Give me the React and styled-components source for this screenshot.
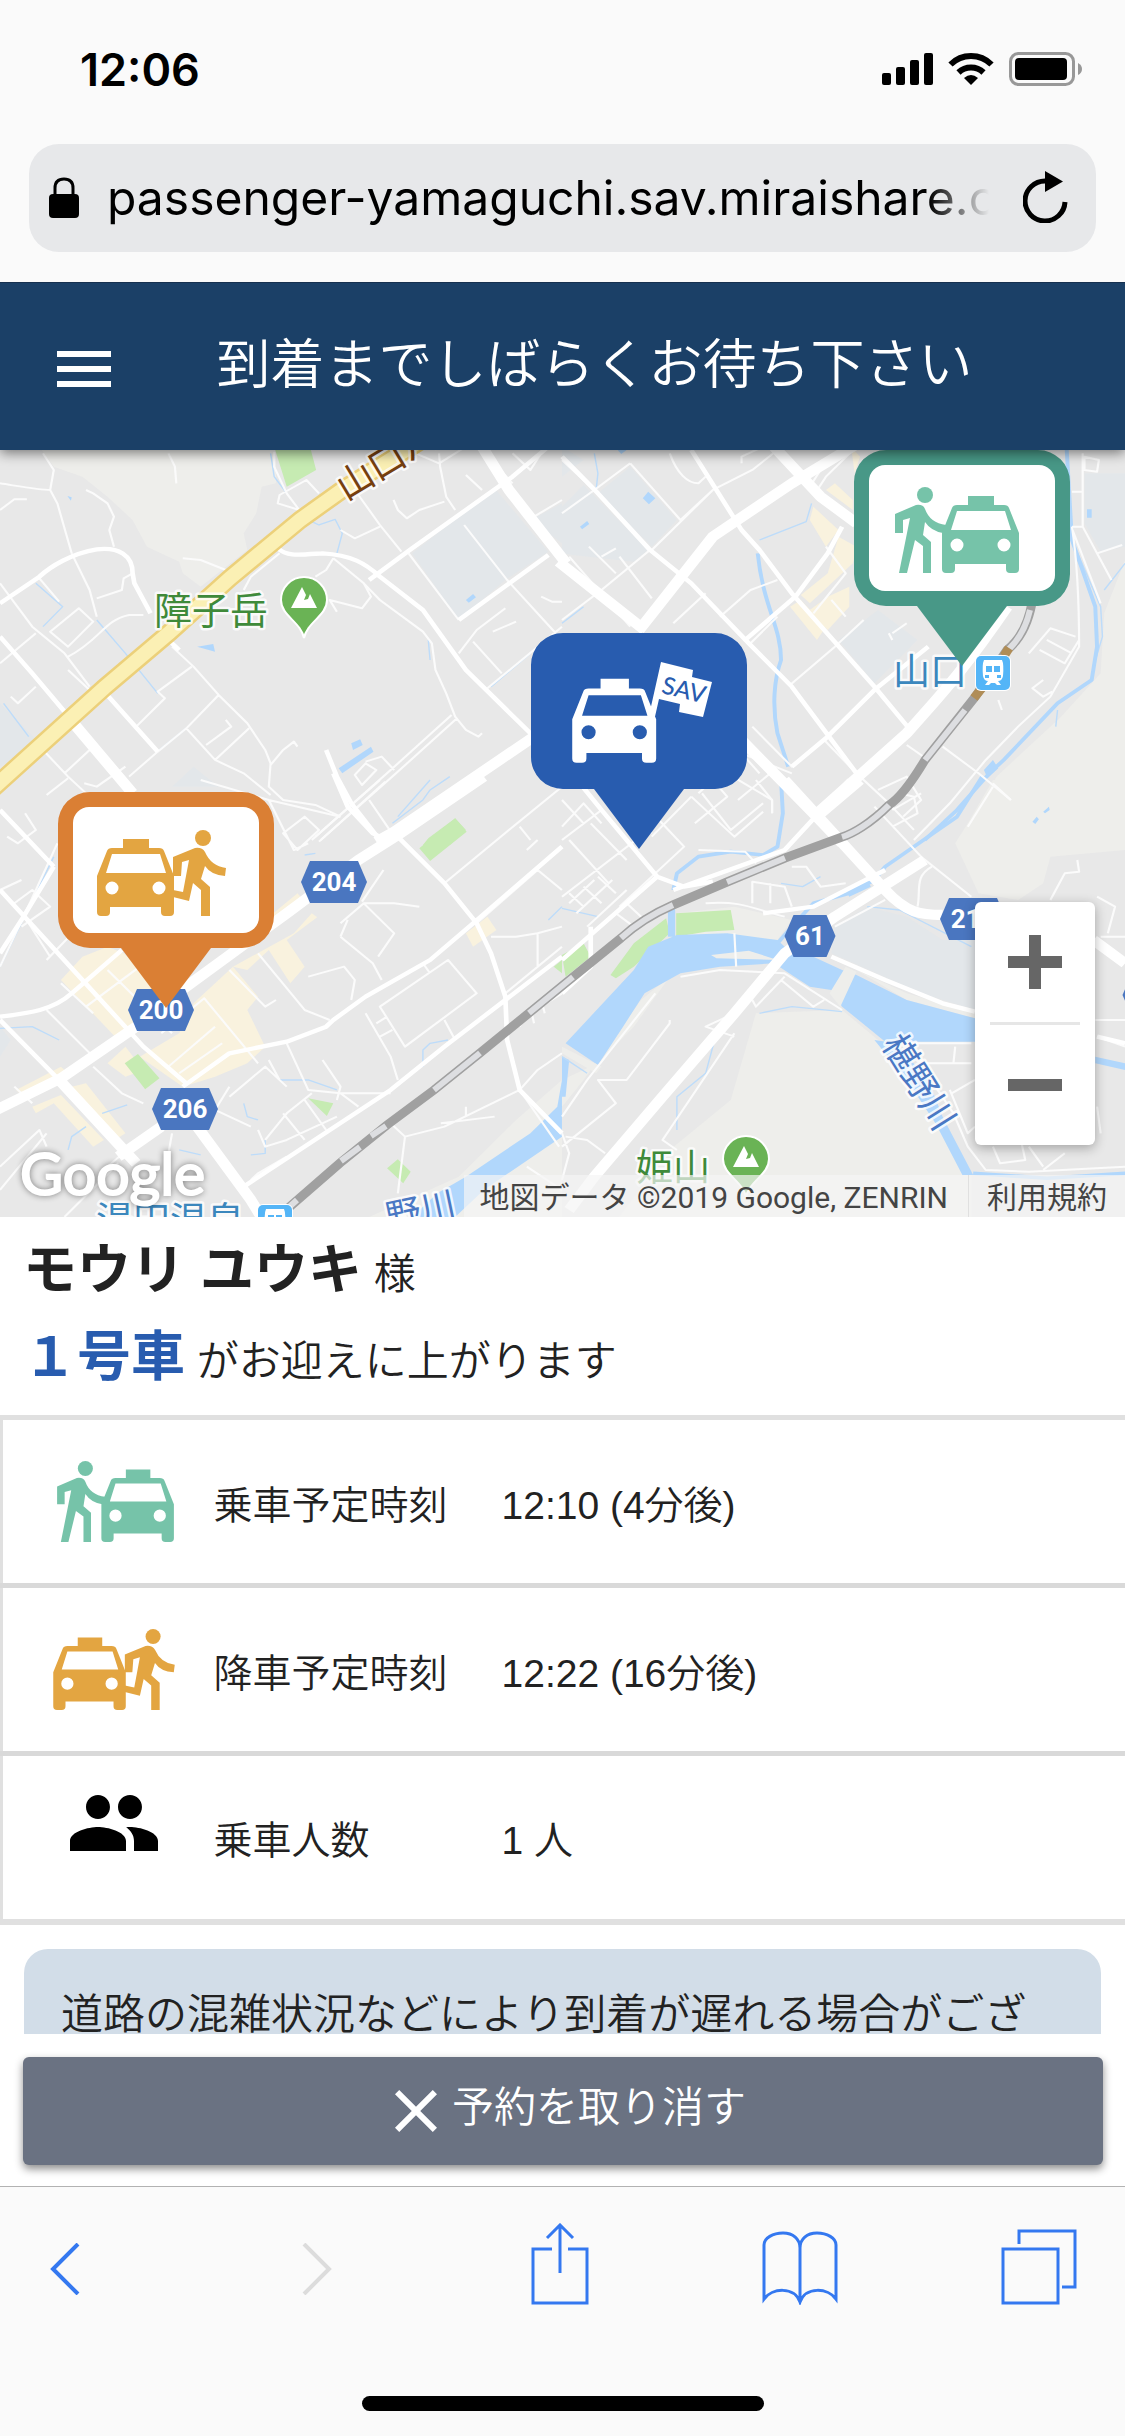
import { styled, createGlobalStyle } from "styled-components";
import { MdClose, MdMenu, MdPeople } from "react-icons/md";

const GlobalStyle = createGlobalStyle`
  * {
    box-sizing: border-box;
  }
  body {
    margin: 0;
    background-color: #fff;
    color: #222;
    font-family: "Liberation Sans", "Noto Sans CJK JP", sans-serif;
  }
  button {
    border: none;
    padding: 0;
    background: none;
    font-family: inherit;
    cursor: pointer;
  }
`;

const Page = styled.div`
  display: flex;
  flex-direction: column;
  min-height: 100vh;
`;

/* ---------- browser bars ---------- */
const TopBar = styled.div`
  background-color: #fafafa;
  padding: 40px 29px 30px;
`;
const StatusBar = styled.div`
  display: flex;
  justify-content: space-between;
  align-items: center;
  height: 58px;
  padding: 0 14px 0 51px;
  margin-bottom: 46px;
`;
const Clock = styled.div`
  font-family: Inter, sans-serif;
  font-size: 45px;
  font-weight: 600;
  color: #000;
`;
const AddressBar = styled.div`
  display: flex;
  align-items: center;
  height: 108px;
  padding: 0 28px 0 20px;
  border-radius: 30px;
  background-color: #e7e8ea;
`;
const Address = styled.input`
  flex: 1;
  min-width: 0;
  margin: 0 34px 0 28px;
  padding: 0;
  border: none;
  outline: none;
  background: none;
  color: #000;
  font-family: Inter, sans-serif;
  font-size: 48px;
  line-height: 64px;
  mask-image: linear-gradient(to left, transparent, #000 60px);
`;
const ToolBar = styled.nav`
  display: grid;
  grid-template-columns: 252fr 230fr 231fr 239fr 75fr;
  align-items: end;
  justify-items: start;
  padding: 36px 48px 0 50px;
`;
const ToolButton = styled.button`
  display: flex;
  padding-bottom: ${(props) => props.$bottom || 0}px;
`;
const BottomBar = styled.footer`
  flex: 1;
  border-top: 1px solid #b2b2b2;
  background-color: #fafafa;
  padding-bottom: 24px;
`;
const HomeBar = styled.div`
  width: 402px;
  height: 15px;
  margin: 91px auto 0;
  border-radius: 8px;
  background-color: #000;
`;

/* ---------- app header ---------- */
const Header = styled.header`
  position: relative;
  z-index: 1;
  display: flex;
  align-items: center;
  height: 168px;
  padding: 4px 48px 0;
  border-top: 1px solid #16304f;
  background-color: #1b4067;
  color: #fff;
  box-shadow: 0 3px 12px rgba(0, 0, 0, 0.5);
  clip-path: inset(0 0 -20px);
`;
const MenuButton = styled.button`
  display: flex;
  color: #fff;
  font-size: 72px;
`;
const Title = styled.h1`
  flex: 1;
  margin: 0 8px 8px 0;
  text-align: center;
  font-size: 54px;
  font-weight: 350;
  line-height: 72px;
`;

/* ---------- map ---------- */
const MapArea = styled.section`
  position: relative;
  height: 767px;
  overflow: hidden;
  background-color: #e8e8e8;
`;
const MapSvg = styled.svg`
  display: block;
  width: 100%;
  height: 100%;
`;
const ZoomBox = styled.div`
  position: absolute;
  right: 30px;
  bottom: 72px;
  width: 120px;
  padding: 0 15px;
  border-radius: 6px;
  background-color: #fff;
  box-shadow: 0 3px 12px rgba(0, 0, 0, 0.3);
`;
const ZoomButton = styled.button`
  display: flex;
  align-items: center;
  justify-content: center;
  width: 100%;
  height: 120px;
  & + & {
    border-top: 3px solid #e6e6e6;
    height: 123px;
  }
`;
const Attribution = styled.div`
  position: absolute;
  right: 0;
  bottom: 0;
  display: flex;
  height: 42px;
  background-color: rgba(245, 245, 245, 0.7);
  color: #444;
  font-family: Roboto, "Noto Sans CJK JP", sans-serif;
  font-size: 30px;
  line-height: 46px;
  white-space: nowrap;
`;
const Copyright = styled.span`
  padding: 0 20px 0 16px;
  border-right: 1px solid #e0e0e0;
`;
const TermsLink = styled.a`
  padding: 0 18px;
  color: #444;
  text-decoration: none;
`;

/* ---------- reservation ---------- */
const Info = styled.section`
  padding: 12px 23px 12px;
`;
const InfoLine = styled.p`
  margin: 0;
  font-size: 42px;
  font-weight: 350;
  line-height: 82px;
`;
const Name = styled.strong`
  font-size: 54px;
  font-weight: 700;
`;
const CarNo = styled(Name)`
  color: #285caf;
`;
const Table = styled.table`
  width: 100%;
  border-collapse: collapse;
  border-top: 5px solid #e0e0e0;
  border-bottom: 6px solid #e0e0e0;
`;
const Row = styled.tr`
  height: 168px;
  border-left: 3px solid #e0e0e0;
  & + & {
    border-top: 5px solid #d9d9d9;
  }
`;
const IconCell = styled.td`
  width: 212px;
  padding: 0 0 ${(props) => props.$lift || 0}px ${(props) => props.$left}px;
  & svg {
    display: block;
  }
`;
const Label = styled.th`
  width: 288px;
  padding: 0;
  text-align: left;
  font-size: 39px;
  font-weight: 350;
`;
const Value = styled.td`
  padding: 0;
  font-size: 39px;
  font-weight: 350;
`;
const NoticeWrap = styled.div`
  height: 109px;
  padding: 24px 24px 0;
  overflow: hidden;
`;
const Notice = styled.p`
  margin: 0;
  padding: 34px 37px;
  border-radius: 24px;
  background-color: #d2dde8;
  font-size: 42px;
  font-weight: 350;
  line-height: 63px;
`;
const Actions = styled.div`
  padding: 23px 22px 21px 23px;
`;
const CancelButton = styled.button`
  display: flex;
  align-items: center;
  justify-content: center;
  width: 100%;
  height: 108px;
  border-radius: 6px;
  background-color: #6a7282;
  color: #fff;
  font-size: 42px;
  font-weight: 350;
  line-height: 60px;
  box-shadow: 0 4px 9px rgba(0, 0, 0, 0.45);
  & svg {
    font-size: 72px;
  }
  & span {
    padding-bottom: 6px;
  }
`;

/* ---------- taxi icons ---------- */
const TAXI =
  "M47 46L57 21Q58 18 62 18H73V9H99V18H109Q113 18 114 21L124 46V82Q124 86 120 86H115Q111 86 111 82V77H60V82Q60 86 56 86H51Q47 86 47 82ZM62 24L56 43H116L110 24ZM68.500 58a6.500 6.500 0 1 0-13 0a6.500 6.500 0 1 0 13 0ZM115.500 58a6.500 6.500 0 1 0-13 0a6.500 6.500 0 1 0 13 0Z";

const BoardShape = () => (
  <g fill="#76c3a9" fillRule="evenodd">
    <circle cx="30" cy="8" r="8" />
    <path d="M0 27L21 18Q28 17 30 22Q35 36 51 38L48 46Q36 44 30 35L28 48L36 55V86H28V59L20 53L12 86H4L15 31L8 33V46H0Z" />
    <path d={TAXI} />
  </g>
);

const AlightShape = () => (
  <g fill="#e3a541" fillRule="evenodd">
    <circle cx="106" cy="8" r="8" />
    <path d="M76 27L98 18Q105 17 108 22Q114 36 129 38L128 46Q114 45 108 36L104 49L113 57V86H104V60L96 53L92 71L76 67V60L86 62L92 30L85 32L84 46H76Z" />
    <path d={TAXI} transform="translate(-47 0)" />
  </g>
);

const BoardIcon = () => (
  <svg width="117" height="81" viewBox="0 0 124 86">
    <BoardShape />
  </svg>
);
const AlightIcon = () => (
  <svg width="122" height="81" viewBox="0 0 129 86">
    <AlightShape />
  </svg>
);

/* ---------- map data ---------- */
const tiles = [
  {
    at: "translate(0 -10) scale(.3584 .3333)",
    hill: "M110 20H770V130L730 140L715 220L680 280L690 330L560 440L510 400L500 365L410 320L370 240L300 170L230 110L150 80Z",
    block:
      "M1380 145L1530 335L1410 420L1280 540L1150 340ZM1480 240L1568 190V310ZM0 790L110 910L0 980ZM540 980L610 1040H480Z",
    park: "M765 20H865L882 90L800 140ZM1180 1215L1195 1195L1270 1135L1300 1170L1255 1215Z",
    lake: "M945 985L1035 920L1042 935L955 1000ZM550 620L595 612L600 635ZM1300 480L1320 462L1328 472L1308 488ZM980 910L1005 898L1012 915L985 930ZM188 168L200 172L198 182Z",
    stream:
      "M870 245L890 255L935 238L955 280L940 340M10 790L80 890M100 430L175 500L120 560M270 540L350 640L440 760M445 930L520 865M1370 740L1480 640M1095 1150L1180 1080L1200 1050L1255 1010M755 40L765 110L800 160M1195 600L1200 660",
    minor:
      "M0 130C60 140 110 150 140 150L160 190L200 340M120 40L150 90L140 150M0 210L40 178H75M240 150L260 160L300 190L318 230L305 270L318 320M470 40L488 80L492 130M765 35V80L800 160L835 210L775 190L780 165L855 120L890 160M510 355L560 360L630 390M200 340L250 450L270 530M0 430L90 560L180 640L250 740M110 415L165 485M140 575L220 505L260 545L190 620ZM190 650C280 600 290 540 360 525H400M270 475L340 450L345 415L370 400M30 770L50 790L100 740M0 670L100 580M190 690L250 750M380 860L460 775L440 755L535 680M480 620L540 680L610 765L690 850L740 930L755 970L750 1040L790 1080L880 1095L950 1130M520 865L610 765M520 865L600 960L680 1000L755 1065M600 960L695 865M575 915L645 860L630 840M755 975L790 930L820 905L830 920M440 935L520 865M360 1010L440 935M950 270L990 295L1060 260M1000 165L1060 255L1120 335M1140 340L1280 540M1295 255L1415 420L1568 600M1225 40L1228 80L1245 170L1270 210M1160 40L1225 70L1300 20M1098 180L1110 210L1135 235L1170 210L1240 185M1300 105L1345 150M1490 230L1568 180M1510 470L1540 485H1568M1280 640L1330 570L1410 505M1375 575L1440 545M1320 605L1400 700M930 355L1015 430L1060 480L1180 575L1205 610L1215 690L1245 760L1270 830L1300 870L1335 890L1345 880M1015 430L1035 470L1010 505L920 480L940 515M880 410L910 390L930 355M1260 825L1090 990L870 1200M1275 835L1105 1000L890 1205M990 1005L1020 970L1050 990L1010 1035ZM1020 965L1065 950L1100 990M120 930L190 1010L250 1070M180 1000L250 930M130 1065L190 1015M235 1030L270 1040L350 980M1100 1190L1030 1080M1360 745L1568 560M1370 60L1430 130M1430 40L1480 90L1510 40M680 450L700 410L780 340",
    road: "M0 490L110 410C140 380 200 340 270 328C330 320 370 345 370 400L375 430L420 520M775 325C800 350 830 345 900 340C980 345 1020 370 1060 410L1180 510L1300 690L1480 880M1030 420L1150 325L1430 110L1530 20M295 760L440 935M0 590L90 700L180 815M910 930L940 1010L980 1090L1060 1200M1280 540L1530 345M470 600L500 630",
    major: "M1345 20L1420 150L1580 370M1050 1205L1100 1175L1490 890M205 850L370 1060",
  },
  {
    at: "translate(562 -10) scale(.3591 .3333)",
    hill: "M1568 360L1510 520L1500 700L1390 830L1210 1010L1110 1200H1568Z",
    block:
      "M0 200L60 135L240 330L200 365L30 345L0 340ZM100 160L190 80L320 240L250 320ZM1455 100H1568V320L1500 335L1455 250ZM770 600L880 510L990 600L870 730ZM0 20L60 60L0 110Z",
    shop: "M735 150L760 130L810 180V210ZM690 240L700 200L770 270L735 320ZM770 290L820 320L810 370L740 440L690 490L665 465L740 400ZM635 500L665 480L735 560L710 600ZM740 470L800 440V500L740 570L690 510ZM805 20L830 50L815 100Z",
    lake: "M225 175L240 155L260 175L242 193ZM50 260L70 243L76 252L56 268ZM1462 208H1475V233H1462ZM1310 1145L1322 1130L1328 1138L1318 1152ZM1340 1115L1356 1100L1358 1110L1345 1120ZM1175 990L1200 960L1215 985L1185 1015ZM155 30H180L165 42Z",
    stream:
      "M695 190L680 245L550 300M90 40L100 100L95 150M1420 300L1500 500L1505 590L1480 680M1568 370L1510 450M1380 810L1375 860M0 550L60 500",
    river:
      "M545 340C560 500 610 560 610 660C590 720 585 800 600 880L630 980M1405 20L1420 300L1485 500L1490 620L1475 720L1380 790L1230 960L1190 1000L1100 1110L1010 1200",
    minor:
      "M0 60L90 150M190 70L90 150L0 220M190 70L330 240L420 150L530 90L600 30M250 330L420 150M20 350L190 560M0 540L110 450L245 330M160 350L250 475M75 320L150 400M110 350L150 325M400 460L310 550M440 530L525 450L600 420M520 615L600 530M635 735L760 620L840 540M735 320L790 400L700 520M750 480L790 530M730 900L820 1000L910 1090L980 1170M960 915L1020 960M1060 920L1160 1000L1250 1080M1300 640L1360 565L1430 590M1330 630L1400 670L1440 600M1350 600L1420 640M1340 720L1310 745L1340 770L1365 755M1215 780L1225 810M910 580L920 600M920 580L960 550M1420 260C1440 400 1440 600 1440 620L1360 770L1270 860L1180 960L1080 1090L980 1200M1420 265L1500 490M1450 260L1530 420M1490 340L1560 315M1455 50L1495 60L1490 95L1455 90ZM1450 40V260H1420M1420 155H1450M380 1060L500 940L550 1000M500 940L640 1000M460 1000L585 1080V1120M390 1060L470 1170L560 1090M250 1190L360 1070M0 1160L60 1090L110 1150M880 1050L960 1010L1000 1080L950 1130M530 860L640 980L730 900M300 40C320 100 350 130 380 130L400 110M500 70V50L560 20M690 140L720 90L800 20M705 160L735 110L820 20",
    road: "M0 50L100 160L245 330L360 430L520 610L640 740L820 1000M360 30L500 270L550 330L640 460L870 740L970 870M510 600L650 470L740 340L780 260M730 900L870 750L1020 620M640 980L740 890",
    major:
      "M-10 365L230 570M215 570L420 290L640 130L840 0M590 20L720 170L820 250M500 900L700 1120L780 1210M700 1130L960 880C1040 780 1100 720 1240 500",
  },
  {
    at: "translate(0 330) scale(.3584 .3333)",
    hill: "M1030 1311L1280 1190L1440 1020L1568 900V1311Z",
    block: "M0 740L30 780L0 830Z",
    shop: "M170 600L230 530L300 500L345 520L470 640L430 700L330 780ZM540 670L610 600L650 560L720 650L690 690L740 800L690 850L600 890L510 920L390 830L500 760ZM650 560L820 460L870 400L885 412L800 480L850 560L810 610L750 510L690 570ZM740 420L830 340L842 355L760 440ZM200 920L240 910L350 1060L320 1080ZM90 980L170 945L290 1080L260 1100L150 970L100 1000ZM45 930L170 860L185 875L60 945ZM300 850L350 800L400 870L350 890ZM1300 460L1360 410L1385 450L1320 500Z",
    park: "M348 850L385 822L445 895L405 928ZM1170 205L1270 115L1302 155L1200 243ZM860 955L930 970L912 1008ZM1080 1165L1110 1138L1146 1175L1125 1210ZM1545 560L1568 540V580Z",
    lake: "M1568 900L1555 980L1480 1060L1300 1190L1220 1240L1150 1311H1270L1350 1230L1568 1070Z",
    stream:
      "M0 745L90 740L165 780M780 900H860L940 930M1180 860V810L1200 790L1250 780M285 1000L355 975M680 970L690 1010L720 1020M1110 110L1200 0M190 1110L200 1070L240 1040M500 1110L560 1125M740 1080V1120L700 1125M850 225L880 220M1530 420L1568 380M0 560L150 230",
    minor:
      "M0 560L70 400L160 190M300 570L480 760M240 680L390 560M170 610L260 700M130 690L260 830L330 770M450 760L570 655L720 850M640 570L740 680L770 660M720 520L850 690L920 720M470 860L600 740M500 880L620 790M950 470L1040 550L1065 600M970 420L950 470M1015 370L1100 460L1055 530M1170 380L1100 370L1015 370L950 430M1010 365L1070 270M1060 680L1250 540L1330 640L1130 800ZM1020 700L1090 830L1110 900M1050 730L1080 710M1060 770L1095 750M1180 550L1200 580M1240 720L1270 780M1240 310L1420 150L1568 20M1330 430L1500 270L1568 330M800 790L860 930L950 940H1090M740 1080L800 1000L870 940M720 1050L740 1100L800 1080L940 1010M790 1000L850 1080M850 960L910 1050M900 840L950 920L940 960M1080 1020L1130 1070L1110 1240M1130 1070L1240 1040L1450 930M1230 1030L1380 1010M1300 980V1010M950 940L1000 980M0 1230L130 1060M0 1160L110 1050L130 1100M180 1311L330 1150M700 1200L720 1180L800 1130M480 1060L460 1180M860 590L960 560L990 600L980 660M640 920L600 990L700 1040M750 840L780 900M640 950L740 860L800 920M790 160L850 110L890 150L830 210ZM750 60L820 210L860 190M560 0L750 60L950 110M880 170L1060 0M895 180L1075 5M1370 470H1440L1500 460L1568 440M1500 460V560M1410 640L1568 500M1450 720L1568 640M1450 740L1470 700M1490 730L1480 680M1520 700L1510 660M1450 930L1500 870L1568 820M1450 140L1480 180M1470 210L1500 180M70 100L100 150L50 190L20 170M40 370L90 330L140 380L60 440M130 540L220 440M80 430L140 530M260 860L340 940L400 970M90 970L40 920M0 330L60 300M300 1160L420 1050M1450 930L1560 1100M1470 1160L1568 1230",
    road: "M0 90L150 260M0 330L230 600L400 800L520 910M0 710C80 700 150 690 200 640L340 510M0 720L165 900M150 260L60 420L0 520M510 920L640 820L800 785L910 740L930 720L1020 650L1200 540L1320 430L1568 200M1110 170L1240 310L1330 430L1370 520L1410 650L1415 780L1450 930L1568 1060M680 1220L1090 930L1240 800L1410 660L1568 530M930 -20L970 80L1040 160L1080 180",
    major:
      "M-10 990L170 895L380 740L520 620L800 400L1000 240L1110 165L1350 -10M165 900L380 1150M330 1130L450 1040M550 1040L700 1260L740 1330",
  },
  {
    at: "translate(562 330) scale(.3591 .3333)",
    hill: "M540 700L780 690L880 780L900 800L1000 930L1140 1180V1311H160L300 1110L470 960ZM1095 190L1130 130L1200 0H1568V210L1360 230L1340 310L1270 360L1160 340ZM320 400L480 380L640 420L600 480H320ZM0 900L100 850L200 740L300 590L220 660L60 900L0 980ZM820 570L960 640L1150 700V715L960 660Z",
    block: "M760 440L850 380L960 410L1060 480H1150V690L1000 640L750 520Z",
    park: "M135 585L200 490L290 415L300 460L200 560L150 595ZM318 400L470 390L480 450L400 455L318 470ZM0 525L60 490L80 530L10 590Z",
    lake: "M10 790L200 570L240 500L320 465L460 460L600 480L640 520L700 530L780 570L820 585L960 660L1150 715V785H900L780 680L750 630L690 620L590 550L440 560L330 580L230 640L170 740L100 855ZM870 780L930 790L1020 900L1060 1010L1145 1185H1115L1040 1030L960 900ZM295 370H315V470H295ZM790 330L850 300L860 320L800 350ZM1485 830L1568 850V870L1485 850ZM0 830L20 840L10 950H0Z",
    bank: "M415 525L520 512L600 540L430 535ZM745 640L790 560L820 575L775 680ZM0 800L110 860L95 880L0 820Z",
    stream:
      "M550 700L640 680L780 695M320 1050V950L400 880L425 780M0 385L100 410M610 310L670 320L720 290M850 380L940 390L1140 500M0 830L70 880",
    river:
      "M310 330L320 280L380 230L470 215L560 225L600 200L615 100L610 0M1170 -10L1100 110L900 260L870 300L800 340L700 370L640 440L600 490M1145 1180L1350 1195L1568 1180",
    minor:
      "M0 180L110 90M0 350L230 160L340 20M20 180L130 310M80 130L180 240M160 60L250 160M0 60L60 130M270 120L340 200L160 380M420 0L460 50L370 130M360 50L480 170L560 95M540 0L585 60V100M490 60L580 -20M870 80L1000 230L1140 350M920 90L1000 40M920 140L990 100L980 50L940 40M1200 10L1250 60M990 380C1000 330 980 290 1030 260M640 260H680L720 320L790 310M530 370V305L620 320L640 380M580 310V370M380 210L510 215L540 250M400 370C500 360 540 390 620 410M330 590L440 570L620 580L780 690M610 600L700 680L730 660M620 590L540 680L530 660M300 720V730L180 900H100L150 970L0 1100M260 640L70 900L0 1010M480 760L280 1080L320 1110M480 770L400 740L480 700M10 1070L70 1080L120 1120M1360 360L1400 280L1440 275L1435 240M1500 470H1568M1490 350L1540 380L1520 460M1485 720H1568M1490 770L1568 800M960 790H1140M1010 850H1140M1095 800L1090 850M1040 920L1090 1000L1130 1100L1180 1170L1300 1175L1568 1160M1085 940L1150 900M1080 930L1130 1060L1150 1040M1200 1100L1220 1150L1290 1140L1280 1090M1340 1170L1400 1120M1300 1100L1340 1160M1490 980L1500 1060M20 340L60 380M60 320L110 370M100 290L150 340M40 400L140 300M70 440L180 330M20 370L90 300M150 400L200 440M180 370L230 420M480 460L485 560M0 1060L20 1120L0 1200M1130 140L1200 20M760 440L900 360",
    road: "M50 10L110 90L265 290L340 320L420 305M750 530L900 600L1060 670L1150 695M0 540L265 290M310 330L620 210L800 0M80 440L80 560L0 640M560 400L700 380L900 270M1490 770L1568 790",
    major:
      "M620 0L900 330C960 400 1000 405 1060 405M1010 240L760 410L620 520L480 700L280 950L90 1190L20 1290M830 0L720 100M1480 480L1568 550",
  },
];

const layers = [
  { key: "hill", fill: "#eeeeeb" },
  { key: "block", fill: "#e3e7ea" },
  { key: "shop", fill: "#f9f2de" },
  { key: "park", fill: "#c6ebb2" },
  { key: "lake", fill: "#b1d7fc" },
  { key: "bank", fill: "#eeeeeb" },
  { key: "stream", stroke: "#bddcfa", width: 4 },
  { key: "river", stroke: "#b1d7fc", width: 11 },
  { key: "minor", stroke: "#fbfbfb", width: 6 },
  { key: "road", stroke: "#fff", width: 13 },
  { key: "major", stroke: "#fff", width: 31 },
];

const HIGHWAY = "M-10 341L104 238L170 182L230 128L300 70L342 40L425 -12";
const RAIL =
  "M1032 153C1026 185 1012 196 1007 200L975 247L925 310C910 335 897 350 889 355C870 374 852 384 842 387L785 408L727 432L673 455C650 465 632 478 621 488L573 527L529 563L480 603L434 640L387 675L340 713L278 767";
const RAIL_LIGHT =
  "M1030 160C1024 186 1012 196 1008 200M965 260L925 310M889 355C870 374 852 384 842 387M785 408L727 432M673 455C650 465 632 478 621 488M573 527L529 563M480 603L434 640M386 676L371 686M360 697L341 711M297 750L278 767";

const badges = [
  { x: 334, y: 432, w: 66, no: "204" },
  { x: 161, y: 560, w: 66, no: "200" },
  { x: 185, y: 659, w: 66, no: "206" },
  { x: 810, y: 486, w: 51, no: "61" },
  { x: 973, y: 469, w: 66, no: "212" },
  { x: 1148, y: 545, w: 51, no: "" },
];

const Place = styled.text`
  font-family: "Noto Sans CJK JP", sans-serif;
  font-size: ${(props) => props.$size || 37}px;
  fill: ${(props) => props.$color};
  stroke: #fff;
  stroke-width: 5px;
  stroke-opacity: 0.8;
  stroke-linejoin: round;
  paint-order: stroke;
`;
const BadgeNo = styled.text`
  font-family: Roboto, sans-serif;
  font-size: 26px;
  font-weight: 700;
  fill: #fff;
`;
const Logo = styled.text`
  font-family: Lato, sans-serif;
  font-size: 59px;
  fill: #fff;
  stroke: #fff;
  stroke-width: 2px;
  filter: drop-shadow(0 0 3px rgba(0, 0, 0, 0.45));
`;
const FlagText = styled.text`
  font-family: Lato, sans-serif;
  font-size: 24px;
  font-weight: 500;
  fill: #285caf;
`;

const Badge = ({ x, y, w, no }) => {
  const h = w / 2;
  return (
    <g transform={`translate(${x} ${y})`}>
      <path
        d={`M${-h} 0L${9 - h} -21H${h - 9}L${h} 0L${h - 9} 21H${9 - h}Z`}
        fill="#4a76c0"
      />
      <BadgeNo y="9" textAnchor="middle">
        {no}
      </BadgeNo>
    </g>
  );
};

const ParkPin = ({ x, y }) => (
  <g transform={`translate(${x} ${y})`}>
    <path
      d="M0 38C-3 22 -23 16 -23 0A23 23 0 1 1 23 0C23 16 3 22 0 38Z"
      fill="#6ab355"
      stroke="#fff"
      strokeWidth="2"
    />
    <path d="M-13 8L-2 -13L2 -5L0 0L4 -1L6 -6L13 8Z" fill="#fff" />
  </g>
);

const StationIcon = ({ x, y }) => (
  <g transform={`translate(${x} ${y})`}>
    <rect x="-1" y="-1" width="36" height="36" rx="6" fill="#fff" />
    <rect width="34" height="34" rx="5" fill="#54b5f7" />
    <path
      d="M8 4H26Q28 8 27 20Q26 25 22 25L25 29H21L19 27H15L13 29H9L12 25Q8 25 7 20Q6 8 8 4ZM10 10V16H16V10ZM18 10V16H24V10ZM9 19V22H13V19ZM21 19V22H25V19Z"
      fill="#fff"
      fillRule="evenodd"
    />
  </g>
);

const Pin = ({ x, y, color, framed, children }) => (
  <g transform={`translate(${x} ${y})`}>
    <path
      d="M32 0H184A32 32 0 0 1 216 32V124A32 32 0 0 1 184 156H153L108 216L63 156H32A32 32 0 0 1 0 124V32A32 32 0 0 1 32 0Z"
      fill={color}
    />
    {framed && <rect x="15" y="15" width="186" height="126" rx="16" fill="#fff" />}
    {children}
  </g>
);

const CityMap = () => (
  <MapSvg viewBox="0 0 1125 767" preserveAspectRatio="xMidYMid slice">
    {layers.map((layer) => (
      <g
        key={layer.key}
        fill={layer.fill || "none"}
        stroke={layer.stroke}
        strokeWidth={layer.width}
        strokeLinejoin="round"
      >
        {tiles.map(
          (tile) =>
            tile[layer.key] && (
              <path key={tile.at} transform={tile.at} d={tile[layer.key]} />
            )
        )}
      </g>
    ))}
    <g fill="none">
      <path d={HIGHWAY} stroke="#ecd07a" strokeWidth="19" />
      <path d={HIGHWAY} stroke="#fbf0b4" strokeWidth="14" />
      <path d={RAIL} stroke="#a0a0a0" strokeWidth="9" />
      <path d={RAIL_LIGHT} stroke="#dddee1" strokeWidth="6" />
      <path d="M1009 198L1004 206M982 238L974 248" stroke="#b08d57" strokeWidth="9" />
    </g>

    <Place x="154" y="174" $size={38} $color="#3f8a3a">障子岳</Place>
    <ParkPin x={304} y={150} />
    <Place x="636" y="731" $color="#3f8a3a">姫山</Place>
    <ParkPin x={746} y={709} />
    <Place x="893" y="235" $color="#3b87bd">山口</Place>
    <StationIcon x={976} y={206} />
    <Place x="96" y="784" $color="#3b87bd">湯田温泉</Place>
    <StationIcon x={258} y={755} />
    <Place transform="translate(346 51) rotate(-31)" $color="#76400f">山口バ</Place>
    <Place transform="translate(881 594) rotate(58)" $size={35} $color="#4a78c4">椹野川</Place>
    <Place transform="translate(389 780) rotate(-12)" $size={35} $color="#4a78c4">野川</Place>
    {badges.map((badge) => (
      <Badge key={badge.x} {...badge} />
    ))}
    <Logo x="20" y="745">Google</Logo>

    <Pin x={58} y={342} color="#da7f34" framed>
      <g transform="translate(39 38)">
        <AlightShape />
      </g>
    </Pin>
    <Pin x={854} y={0} color="#489887" framed>
      <g transform="translate(41 37)">
        <BoardShape />
      </g>
    </Pin>
    <Pin x={531} y={183} color="#285caf">
      <path
        d={TAXI}
        transform="translate(-10 36) scale(1.09)"
        fill="#fff"
        fillRule="evenodd"
      />
      <path d="M119 78L130 29L162 37L161 44L181 49L172 84L148 79L149 71L128 66L123 88Z" fill="#fff" />
      <FlagText transform="translate(151 65) rotate(14)" textAnchor="middle">
        SAV
      </FlagText>
    </Pin>
  </MapSvg>
);

/* ---------- browser icons ---------- */
const StatusIcons = () => (
  <svg width="200" height="34" viewBox="0 0 200 34">
    <rect x="0" y="21" width="9" height="12" rx="2" />
    <rect x="14" y="15" width="9" height="18" rx="2" />
    <rect x="28" y="8" width="9" height="25" rx="2" />
    <rect x="42" y="1" width="9" height="32" rx="2" />
    <g fill="none" stroke="#000" strokeWidth="6">
      <path d="M68.500 12.500A29 29 0 0 1 109.500 12.500" />
      <path d="M76.500 20.500A18 18 0 0 1 101.500 20.500" />
    </g>
    <path d="M82 26Q89 20 96 26L89 33Z" />
    <rect x="128.500" y="1.500" width="63" height="31" rx="8" fill="none" stroke="#989898" strokeWidth="3" />
    <rect x="133" y="6" width="52" height="22" rx="4" />
    <path d="M196 11Q200 13 200 17Q200 21 196 23Z" fill="#989898" />
  </svg>
);

const LockIcon = () => (
  <svg width="30" height="42" viewBox="0 0 30 42">
    <rect y="17" width="30" height="24" rx="4" />
    <path d="M6 18V11Q6 2 15 2Q24 2 24 11V18" fill="none" stroke="#000" strokeWidth="3" />
  </svg>
);

const ReloadIcon = () => (
  <svg width="45" height="52" viewBox="0 0 45 52">
    <path d="M22.500 10A20 20 0 1 0 42 31" fill="none" stroke="#000" strokeWidth="5" />
    <path d="M22 0L40 10.500L22 21Z" />
  </svg>
);

const Line = styled.svg`
  fill: none;
  stroke: ${(props) => props.$color || "#3478f0"};
  stroke-width: ${(props) => props.$weight || 3}px;
`;

function App() {
  return (
    <Page>
      <GlobalStyle />
      <TopBar>
        <StatusBar>
          <Clock>12:06</Clock>
          <StatusIcons />
        </StatusBar>
        <AddressBar>
          <LockIcon />
          <Address
            aria-label="アドレス"
            readOnly
            value="passenger-yamaguchi.sav.miraishare.co.jp"
          />
          <button aria-label="再読み込み">
            <ReloadIcon />
          </button>
        </AddressBar>
      </TopBar>

      <Header>
        <MenuButton aria-label="メニュー">
          <MdMenu />
        </MenuButton>
        <Title>到着までしばらくお待ち下さい</Title>
      </Header>

      <MapArea>
        <CityMap />
        <Attribution>
          <Copyright>地図データ ©2019 Google, ZENRIN</Copyright>
          <TermsLink href="#terms">利用規約</TermsLink>
        </Attribution>
        <ZoomBox>
          <ZoomButton aria-label="拡大">
            <svg width="54" height="54" fill="#666">
              <path d="M21 0H33V21H54V33H33V54H21V33H0V21H21Z" />
            </svg>
          </ZoomButton>
          <ZoomButton aria-label="縮小">
            <svg width="54" height="12" fill="#666">
              <path d="M0 0H54V12H0Z" />
            </svg>
          </ZoomButton>
        </ZoomBox>
      </MapArea>

      <Info>
        <InfoLine>
          <Name>モウリ ユウキ</Name> 様
        </InfoLine>
        <InfoLine>
          <CarNo>１号車</CarNo> がお迎えに上がります
        </InfoLine>
      </Info>

      <Table>
        <tbody>
          <Row>
            <IconCell $left={54}>
              <BoardIcon />
            </IconCell>
            <Label scope="row">乗車予定時刻</Label>
            <Value>12:10 (4分後)</Value>
          </Row>
          <Row>
            <IconCell $left={50}>
              <AlightIcon />
            </IconCell>
            <Label scope="row">降車予定時刻</Label>
            <Value>12:22 (16分後)</Value>
          </Row>
          <Row>
            <IconCell $left={63} $lift={28}>
              <MdPeople size={96} color="#000" />
            </IconCell>
            <Label scope="row">乗車人数</Label>
            <Value>1 人</Value>
          </Row>
        </tbody>
      </Table>

      <NoticeWrap>
        <Notice>道路の混雑状況などにより到着が遅れる場合がござ</Notice>
      </NoticeWrap>

      <Actions>
        <CancelButton>
          <MdClose />
          <span>予約を取り消す</span>
        </CancelButton>
      </Actions>

      <BottomBar>
        <ToolBar>
          <ToolButton aria-label="戻る" $bottom={10}>
            <Line width="30" height="52" $weight={4}>
              <path d="M28 1L3 26L28 51" />
            </Line>
          </ToolButton>
          <ToolButton aria-label="進む" $bottom={10}>
            <Line width="30" height="52" $weight={4} $color="#dcdcdc">
              <path d="M2 1L27 26L2 51" />
            </Line>
          </ToolButton>
          <ToolButton aria-label="共有">
            <Line width="58" height="82">
              <path d="M21 26H2V80H56V26H37M29 50V2M16 15L29 2L42 15" />
            </Line>
          </ToolButton>
          <ToolButton aria-label="ブックマーク">
            <Line width="76" height="74">
              <path d="M38 17C38 8 31 2 21 2C11 2 2 7 2 14V68C10 57 32 55 38 71C44 55 66 57 74 68V14C74 7 65 2 55 2C45 2 38 8 38 17V71" />
            </Line>
          </ToolButton>
          <ToolButton aria-label="タブ">
            <Line width="76" height="76">
              <path d="M2 20H57V74H2ZM18 15V2H74V58H61" />
            </Line>
          </ToolButton>
        </ToolBar>
        <HomeBar />
      </BottomBar>
    </Page>
  );
}

export default App;
